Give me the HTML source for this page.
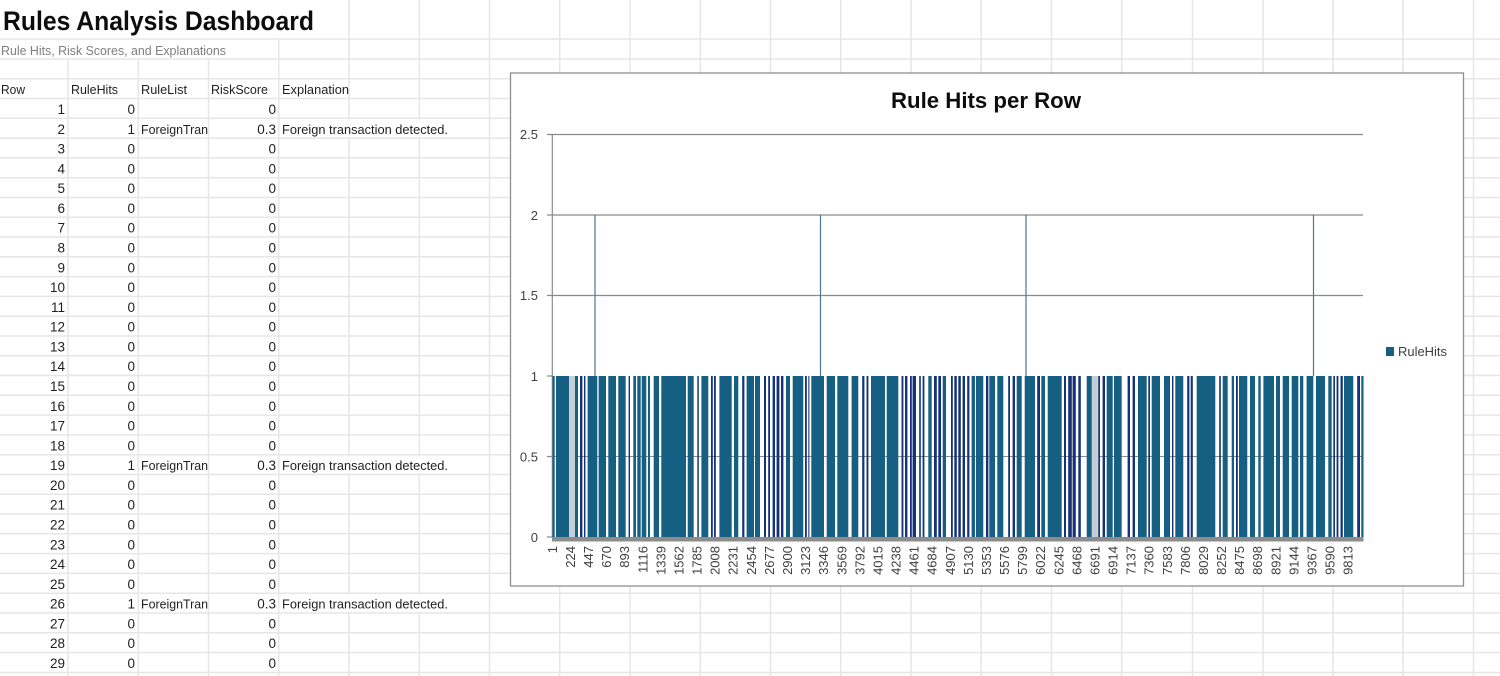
<!DOCTYPE html>
<html lang="en"><head><meta charset="utf-8"><title>Rules Analysis Dashboard</title>
<style>
html,body{margin:0;padding:0;background:#fff;width:1500px;height:676px;overflow:hidden}
svg{display:block}
text{font-family:"Liberation Sans",sans-serif;fill:#1f1f1f;font-size:13px}
.e text{text-anchor:end;font-size:13.5px}
.x text{font-size:13px;fill:#404040;text-anchor:end}
.y text{font-size:13px;fill:#404040;text-anchor:end}
</style></head><body>
<svg width="1500" height="676" viewBox="0 0 1500 676" xmlns="http://www.w3.org/2000/svg">
<defs>
<pattern id="gap" patternUnits="userSpaceOnUse" width="1500" height="676">
<rect width="1500" height="676" fill="#fff"/>
<rect x="0" y="456" width="1500" height="1" fill="#8a8a8a"/>
</pattern>
</defs>
<!-- sheet grid -->
<path fill="none" stroke="#e6e6e6" stroke-width="1.5" d="M0 39H1500M0 59H1500M0 78.7H1500M0 98.5H1500M0 118.3H1500M0 138.1H1500M0 157.9H1500M0 177.7H1500M0 197.5H1500M0 217.2H1500M0 237H1500M0 256.8H1500M0 276.6H1500M0 296.4H1500M0 316.2H1500M0 336H1500M0 355.7H1500M0 375.5H1500M0 395.3H1500M0 415.1H1500M0 434.9H1500M0 454.7H1500M0 474.5H1500M0 494.2H1500M0 514H1500M0 533.8H1500M0 553.6H1500M0 573.4H1500M0 593.2H1500M0 613H1500M0 632.7H1500M0 652.5H1500M0 672.5H1500
M68 59V676M138.2 59V676M208.5 59V676M278.7 39V676M349 0V676M419.2 0V676M489.5 0V676M559.7 0V676M630 0V676M700.2 0V676M770.5 0V676M840.7 0V676M911 0V676M981.2 0V676M1051.5 0V676M1121.7 0V676M1192.5 0V676M1263 0V676M1333 0V676M1403 0V676M1473.5 0V676"/>
<rect x="0" y="40" width="278" height="18" fill="#fff"/>
<rect x="0" y="0" width="348" height="38" fill="#fff"/>
<rect x="280" y="119.5" width="208" height="17.5" fill="#fff"/>
<rect x="280" y="455.8" width="208" height="17.5" fill="#fff"/>
<rect x="280" y="594.3" width="208" height="17.5" fill="#fff"/>
<!-- headings -->
<text x="3" y="30" font-weight="700" style="font-size:27px;fill:#0d0d0d" textLength="311" lengthAdjust="spacingAndGlyphs">Rules Analysis Dashboard</text>
<text x="1" y="55" style="fill:#7f7f7f" textLength="225" lengthAdjust="spacingAndGlyphs">Rule Hits, Risk Scores, and Explanations</text>
<text x="1" y="94" textLength="24" lengthAdjust="spacingAndGlyphs">Row</text>
<text x="71" y="94" textLength="47" lengthAdjust="spacingAndGlyphs">RuleHits</text>
<text x="141" y="94" textLength="46" lengthAdjust="spacingAndGlyphs">RuleList</text>
<text x="211" y="94" textLength="57" lengthAdjust="spacingAndGlyphs">RiskScore</text>
<text x="282" y="94" textLength="67" lengthAdjust="spacingAndGlyphs">Explanation</text>
<!-- column A -->
<g class="e">
<text x="65" y="114">1</text><text x="65" y="133.8">2</text><text x="65" y="153.6">3</text><text x="65" y="173.4">4</text><text x="65" y="193.1">5</text><text x="65" y="212.9">6</text><text x="65" y="232.7">7</text><text x="65" y="252.5">8</text><text x="65" y="272.3">9</text><text x="65" y="292.1">10</text><text x="65" y="311.9">11</text><text x="65" y="331.6">12</text><text x="65" y="351.4">13</text><text x="65" y="371.2">14</text><text x="65" y="391">15</text><text x="65" y="410.8">16</text><text x="65" y="430.6">17</text><text x="65" y="450.4">18</text><text x="65" y="470.1">19</text><text x="65" y="489.9">20</text><text x="65" y="509.7">21</text><text x="65" y="529.5">22</text><text x="65" y="549.3">23</text><text x="65" y="569.1">24</text><text x="65" y="588.9">25</text><text x="65" y="608.6">26</text><text x="65" y="628.4">27</text><text x="65" y="648.2">28</text><text x="65" y="668">29</text>
</g>
<!-- column B -->
<g class="e">
<text x="135" y="114">0</text><text x="135" y="133.8">1</text><text x="135" y="153.6">0</text><text x="135" y="173.4">0</text><text x="135" y="193.1">0</text><text x="135" y="212.9">0</text><text x="135" y="232.7">0</text><text x="135" y="252.5">0</text><text x="135" y="272.3">0</text><text x="135" y="292.1">0</text><text x="135" y="311.9">0</text><text x="135" y="331.6">0</text><text x="135" y="351.4">0</text><text x="135" y="371.2">0</text><text x="135" y="391">0</text><text x="135" y="410.8">0</text><text x="135" y="430.6">0</text><text x="135" y="450.4">0</text><text x="135" y="470.1">1</text><text x="135" y="489.9">0</text><text x="135" y="509.7">0</text><text x="135" y="529.5">0</text><text x="135" y="549.3">0</text><text x="135" y="569.1">0</text><text x="135" y="588.9">0</text><text x="135" y="608.6">1</text><text x="135" y="628.4">0</text><text x="135" y="648.2">0</text><text x="135" y="668">0</text>
</g>
<!-- column D -->
<g class="e">
<text x="276" y="114">0</text><text x="276" y="133.8">0.3</text><text x="276" y="153.6">0</text><text x="276" y="173.4">0</text><text x="276" y="193.1">0</text><text x="276" y="212.9">0</text><text x="276" y="232.7">0</text><text x="276" y="252.5">0</text><text x="276" y="272.3">0</text><text x="276" y="292.1">0</text><text x="276" y="311.9">0</text><text x="276" y="331.6">0</text><text x="276" y="351.4">0</text><text x="276" y="371.2">0</text><text x="276" y="391">0</text><text x="276" y="410.8">0</text><text x="276" y="430.6">0</text><text x="276" y="450.4">0</text><text x="276" y="470.1">0.3</text><text x="276" y="489.9">0</text><text x="276" y="509.7">0</text><text x="276" y="529.5">0</text><text x="276" y="549.3">0</text><text x="276" y="569.1">0</text><text x="276" y="588.9">0</text><text x="276" y="608.6">0.3</text><text x="276" y="628.4">0</text><text x="276" y="648.2">0</text><text x="276" y="668">0</text>
</g>
<!-- RuleList / Explanation -->
<text x="141" y="133.8" textLength="67" lengthAdjust="spacingAndGlyphs">ForeignTran</text>
<text x="141" y="470.1" textLength="67" lengthAdjust="spacingAndGlyphs">ForeignTran</text>
<text x="141" y="608.6" textLength="67" lengthAdjust="spacingAndGlyphs">ForeignTran</text>
<text x="282" y="133.8" textLength="166" lengthAdjust="spacingAndGlyphs">Foreign transaction detected.</text>
<text x="282" y="470.1" textLength="166" lengthAdjust="spacingAndGlyphs">Foreign transaction detected.</text>
<text x="282" y="608.6" textLength="166" lengthAdjust="spacingAndGlyphs">Foreign transaction detected.</text>
<!-- chart -->
<rect x="510.5" y="73" width="953" height="513" fill="#fff" stroke="#8e8e8e" stroke-width="1.3"/>
<text x="986" y="108" text-anchor="middle" font-weight="700" style="font-size:22px;fill:#0d0d0d" textLength="190" lengthAdjust="spacingAndGlyphs">Rule Hits per Row</text>
<path fill="none" stroke="#8a8a8a" stroke-width="1.2" d="M547 134.500H1363M547 215H1363M547 295.500H1363M547 376H552M547 456.500H552M547 537H552M552.300 134V537"/>
<path fill="none" stroke="#4f7690" stroke-width="1.2" d="M595 215V376M820.500 215V376M1026 215V376M1313.500 215V376"/>
<rect x="552.500" y="376" width="811" height="161" fill="#156082"/>
<path fill="url(#gap)" d="M554.700 376h1.300v161h-1.300zM578 376h2v161h-2zM582.300 376h1.700v161h-1.700zM585.300 376h2.300v161h-2.300zM597.300 376h1.300v161h-1.300zM606 376h2.300v161h-2.300zM616 376h2.300v161h-2.300zM625.700 376h3v161h-3zM630 376h3.300v161h-3.300zM636 376h1.300v161h-1.300zM640.700 376h1v161h-1zM646.300 376h1.700v161h-1.700zM650 376h3.700v161h-3.700zM659 376h2.300v161h-2.300zM686 376h1.700v161h-1.700zM693.700 376h3.700v161h-3.700zM698.700 376h2.700v161h-2.700zM708.300 376h2.700v161h-2.700zM712.700 376h1.300v161h-1.300zM715.700 376h3.700v161h-3.700zM731.700 376h2.300v161h-2.300zM738.300 376h4v161h-4zM744.300 376h2.300v161h-2.300zM754 376h1v161h-1zM760 376h4v161h-4zM766 376h2.300v161h-2.300zM770 376h2.700v161h-2.700zM775 376h1.700v161h-1.700zM779.300 376h1.700v161h-1.700zM783.300 376h2.700v161h-2.700zM790 376h2.700v161h-2.700zM803.300 376h1.700v161h-1.700zM806.700 376h1.700v161h-1.700zM809.300 376h2v161h-2zM824 376h2.700v161h-2.700zM835 376h2.300v161h-2.300zM848.300 376h3.300v161h-3.300zM858.300 376h4v161h-4zM864.300 376h2.300v161h-2.300zM868.300 376h2.700v161h-2.700zM885 376h1.700v161h-1.700zM898.300 376h3.300v161h-3.300zM903.300 376h1.700v161h-1.700zM907.300 376h2.700v161h-2.700zM911.700 376h1v161h-1zM916 376h3.300v161h-3.300zM920.700 376h2v161h-2zM924.300 376h4v161h-4zM931.700 376h2.300v161h-2.300zM936.700 376h1.700v161h-1.700zM941 376h1.700v161h-1.700zM946 376h5v161h-5zM952.700 376h1.700v161h-1.700zM956.700 376h1.700v161h-1.700zM960.700 376h2v161h-2zM965 376h2.300v161h-2.300zM969.300 376h2.300v161h-2.300zM975 376h1v161h-1zM983.300 376h2.700v161h-2.700zM988.300 376h1v161h-1zM995 376h2.300v161h-2.300zM1003.300 376h5v161h-5zM1010 376h2.700v161h-2.700zM1015 376h1.700v161h-1.700zM1021.700 376h3v161h-3zM1035 376h2.300v161h-2.300zM1040 376h1.300v161h-1.300zM1045 376h2.700v161h-2.700zM1061.700 376h2.300v161h-2.300zM1066 376h2.300v161h-2.300zM1071.700 376h1v161h-1zM1075.700 376h2.700v161h-2.700zM1080.700 376h6v161h-6zM1100 376h2.700v161h-2.700zM1105 376h1.700v161h-1.700zM1112.700 376h1.300v161h-1.300zM1121.700 376h6v161h-6zM1130 376h2.700v161h-2.700zM1135 376h3v161h-3zM1146.700 376h1.700v161h-1.700zM1150 376h1.700v161h-1.700zM1160 376h4v161h-4zM1170 376h2v161h-2zM1173.300 376h2v161h-2zM1183.300 376h4v161h-4zM1189.300 376h1.500v161h-1.500zM1192.700 376h4v161h-4zM1215.300 376h4v161h-4zM1220.700 376h2v161h-2zM1227.700 376h4v161h-4zM1234 376h2v161h-2zM1237.700 376h1.300v161h-1.300zM1247.300 376h2.700v161h-2.700zM1255 376h3.300v161h-3.300zM1260.700 376h2.700v161h-2.700zM1274 376h2v161h-2zM1280 376h2.700v161h-2.700zM1289 376h2.700v161h-2.700zM1298.300 376h1.700v161h-1.700zM1303.300 376h3.300v161h-3.300zM1313.300 376h2.700v161h-2.700zM1325 376h3.300v161h-3.300zM1331.700 376h1.700v161h-1.700zM1335 376h1.700v161h-1.700zM1338.300 376h2.300v161h-2.300zM1342.700 376h1.300v161h-1.300zM1353.300 376h4v161h-4zM1360 376h1.300v161h-1.300z"/>
<path fill="#c4ced7" d="M569 376h6v161h-6zM1091.700 376h6.700v161h-6.700z"/>
<path fill="#17307a" d="M580 376h2.300v161h-2.300zM584 376h1.300v161h-1.300zM628.700 376h1.300v161h-1.300zM697.400 376h1.300v161h-1.300zM711 376h1.700v161h-1.700zM714 376h1.700v161h-1.700zM742.300 376h2v161h-2zM764 376h2v161h-2zM768.300 376h1.700v161h-1.700zM772.700 376h2.300v161h-2.300zM776.700 376h2.600v161h-2.600zM781 376h2.300v161h-2.300zM805 376h1.700v161h-1.700zM808.400 376h0.900v161h-0.900zM862.300 376h2v161h-2zM866.600 376h1.700v161h-1.700zM901.600 376h1.700v161h-1.700zM905 376h2.300v161h-2.300zM910 376h1.700v161h-1.700zM912.700 376h3.300v161h-3.300zM919.300 376h1.400v161h-1.400zM922.700 376h1.600v161h-1.600zM934 376h2.700v161h-2.700zM938.400 376h2.600v161h-2.600zM951 376h1.700v161h-1.700zM954.400 376h2.300v161h-2.300zM958.400 376h2.300v161h-2.300zM962.700 376h2.300v161h-2.300zM967.300 376h2v161h-2zM986 376h2.300v161h-2.300zM1008.300 376h1.700v161h-1.700zM1012.700 376h2.300v161h-2.300zM1037.300 376h2.700v161h-2.700zM1064 376h2v161h-2zM1068.300 376h3.400v161h-3.400zM1072.700 376h3v161h-3zM1078.400 376h2.300v161h-2.300zM1098.400 376h1.600v161h-1.600zM1102.700 376h2.300v161h-2.300zM1127.700 376h2.300v161h-2.300zM1132.700 376h2.300v161h-2.300zM1148.400 376h1.600v161h-1.600zM1172 376h1.300v161h-1.300zM1187.300 376h2v161h-2zM1190.800 376h1.900v161h-1.900zM1219.300 376h1.400v161h-1.400zM1236 376h1.700v161h-1.700zM1333.400 376h1.600v161h-1.600zM1336.700 376h1.600v161h-1.600zM1340.600 376h2.100v161h-2.100zM1357.300 376h2.700v161h-2.700z"/>
<rect x="552" y="537" width="811.500" height="4.500" fill="#8c8c8c"/>
<g class="y">
<text x="538" y="139">2.5</text><text x="538" y="220">2</text><text x="538" y="300">1.5</text><text x="538" y="381">1</text><text x="538" y="461.500">0.5</text><text x="538" y="542">0</text>
</g>
<g class="x">
<text transform="translate(557,546) rotate(-90)">1</text>
<text transform="translate(575,546) rotate(-90)">224</text>
<text transform="translate(593,546) rotate(-90)">447</text>
<text transform="translate(611,546) rotate(-90)">670</text>
<text transform="translate(629,546) rotate(-90)">893</text>
<text transform="translate(647.500,546) rotate(-90)">1116</text>
<text transform="translate(665.500,546) rotate(-90)">1339</text>
<text transform="translate(683.500,546) rotate(-90)">1562</text>
<text transform="translate(701.500,546) rotate(-90)">1785</text>
<text transform="translate(719.500,546) rotate(-90)">2008</text>
<text transform="translate(737.500,546) rotate(-90)">2231</text>
<text transform="translate(756,546) rotate(-90)">2454</text>
<text transform="translate(774,546) rotate(-90)">2677</text>
<text transform="translate(792,546) rotate(-90)">2900</text>
<text transform="translate(810,546) rotate(-90)">3123</text>
<text transform="translate(828,546) rotate(-90)">3346</text>
<text transform="translate(846.500,546) rotate(-90)">3569</text>
<text transform="translate(864.500,546) rotate(-90)">3792</text>
<text transform="translate(882.500,546) rotate(-90)">4015</text>
<text transform="translate(900.500,546) rotate(-90)">4238</text>
<text transform="translate(918.500,546) rotate(-90)">4461</text>
<text transform="translate(936.500,546) rotate(-90)">4684</text>
<text transform="translate(955,546) rotate(-90)">4907</text>
<text transform="translate(973,546) rotate(-90)">5130</text>
<text transform="translate(991,546) rotate(-90)">5353</text>
<text transform="translate(1009,546) rotate(-90)">5576</text>
<text transform="translate(1027,546) rotate(-90)">5799</text>
<text transform="translate(1045,546) rotate(-90)">6022</text>
<text transform="translate(1063.500,546) rotate(-90)">6245</text>
<text transform="translate(1081.500,546) rotate(-90)">6468</text>
<text transform="translate(1099.500,546) rotate(-90)">6691</text>
<text transform="translate(1117.500,546) rotate(-90)">6914</text>
<text transform="translate(1135.500,546) rotate(-90)">7137</text>
<text transform="translate(1153.500,546) rotate(-90)">7360</text>
<text transform="translate(1172,546) rotate(-90)">7583</text>
<text transform="translate(1190,546) rotate(-90)">7806</text>
<text transform="translate(1208,546) rotate(-90)">8029</text>
<text transform="translate(1226,546) rotate(-90)">8252</text>
<text transform="translate(1244,546) rotate(-90)">8475</text>
<text transform="translate(1262,546) rotate(-90)">8698</text>
<text transform="translate(1280.500,546) rotate(-90)">8921</text>
<text transform="translate(1298.500,546) rotate(-90)">9144</text>
<text transform="translate(1316.500,546) rotate(-90)">9367</text>
<text transform="translate(1334.500,546) rotate(-90)">9590</text>
<text transform="translate(1352.500,546) rotate(-90)">9813</text>
</g>
<rect x="1386" y="347" width="8" height="9" fill="#156082"/>
<text x="1398" y="356" style="font-size:12.5px;fill:#404040" textLength="49" lengthAdjust="spacingAndGlyphs">RuleHits</text>
</svg>
</body></html>
